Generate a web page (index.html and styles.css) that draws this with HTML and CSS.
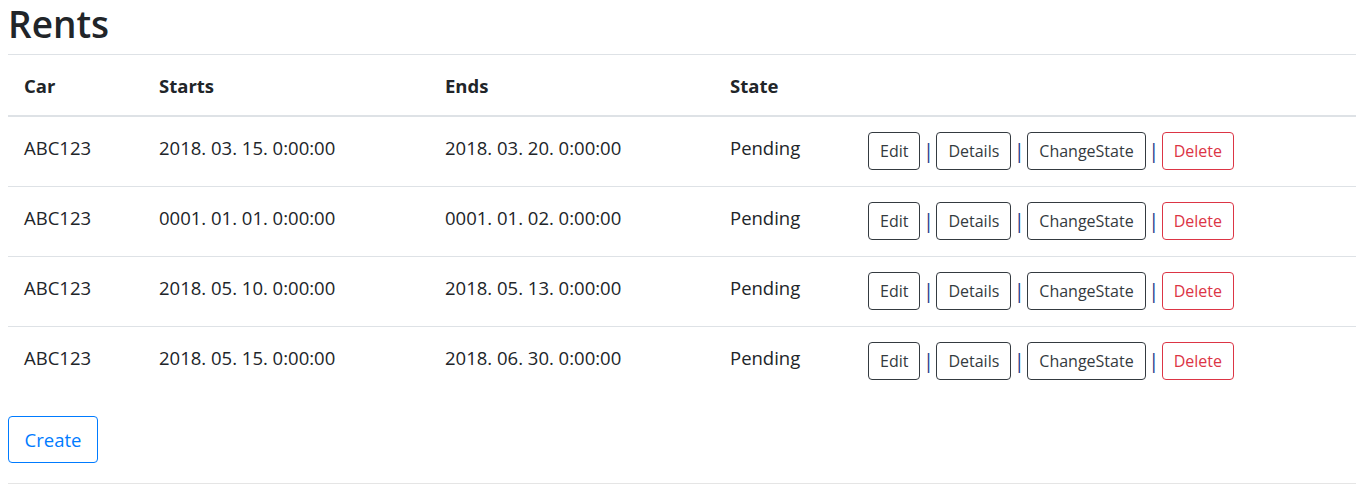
FILE: index.html
```html
<!DOCTYPE html>
<html lang="en">
<head>
<meta charset="utf-8">
<title>Rents</title>
<link rel="stylesheet" href="styles.css">
</head>
<body>
<h1 class="title">Rents</h1>
<table class="table">
  <colgroup>
    <col class="c-car">
    <col class="c-start">
    <col class="c-end">
    <col class="c-state">
    <col class="c-act">
  </colgroup>
  <thead>
    <tr>
      <th>Car</th>
      <th>Starts</th>
      <th>Ends</th>
      <th>State</th>
      <th></th>
    </tr>
  </thead>
  <tbody>
    <tr>
      <td>ABC123</td>
      <td>2018. 03. 15. 0:00:00</td>
      <td>2018. 03. 20. 0:00:00</td>
      <td>Pending</td>
      <td class="actions"><div class="btns"><a class="btn btn-dark">Edit</a><span class="sep">|</span><a class="btn btn-dark">Details</a><span class="sep">|</span><a class="btn btn-dark">ChangeState</a><span class="sep">|</span><a class="btn btn-danger">Delete</a></div></td>
    </tr>
    <tr>
      <td>ABC123</td>
      <td>0001. 01. 01. 0:00:00</td>
      <td>0001. 01. 02. 0:00:00</td>
      <td>Pending</td>
      <td class="actions"><div class="btns"><a class="btn btn-dark">Edit</a><span class="sep">|</span><a class="btn btn-dark">Details</a><span class="sep">|</span><a class="btn btn-dark">ChangeState</a><span class="sep">|</span><a class="btn btn-danger">Delete</a></div></td>
    </tr>
    <tr>
      <td>ABC123</td>
      <td>2018. 05. 10. 0:00:00</td>
      <td>2018. 05. 13. 0:00:00</td>
      <td>Pending</td>
      <td class="actions"><div class="btns"><a class="btn btn-dark">Edit</a><span class="sep">|</span><a class="btn btn-dark">Details</a><span class="sep">|</span><a class="btn btn-dark">ChangeState</a><span class="sep">|</span><a class="btn btn-danger">Delete</a></div></td>
    </tr>
    <tr>
      <td>ABC123</td>
      <td>2018. 05. 15. 0:00:00</td>
      <td>2018. 06. 30. 0:00:00</td>
      <td>Pending</td>
      <td class="actions"><div class="btns"><a class="btn btn-dark">Edit</a><span class="sep">|</span><a class="btn btn-dark">Details</a><span class="sep">|</span><a class="btn btn-dark">ChangeState</a><span class="sep">|</span><a class="btn btn-danger">Delete</a></div></td>
    </tr>
  </tbody>
</table>
<div class="create-row"><a class="btn-create">Create</a></div>
<hr class="rule">
</body>
</html>
```
FILE: styles.css
```css
html, body {
  background: #fff;
}
body {
  margin: 0 0 0 8px;
  font-family: "Open Sans", "Noto Sans", sans-serif;
  color: #212529;
  font-size: 18.5px;
  line-height: 27px;
}
.title {
  margin: 0;
  height: 54px;
  font-size: 37px;
  font-weight: 600;
  line-height: 47px;
  color: #212529;
}
.table {
  width: 100%;
  table-layout: fixed;
  border-collapse: collapse;
  border-top: 1px solid #dee2e6;
}
.c-car { width: 136px; }
.c-start { width: 286px; }
.c-end { width: 285px; }
.c-state { width: 138px; }
.table th, .table td {
  padding: 17px 15px 15px 15px;
  text-align: left;
  vertical-align: top;
  white-space: nowrap;
}
.table th:first-child, .table td:first-child {
  padding-left: 16px;
}
.table th {
  font-weight: 700;
  padding-top: 17px;
  padding-bottom: 16px;
  border-bottom: 2px solid #dee2e6;
}
.table tbody tr + tr td {
  border-top: 1px solid #dee2e6;
}
.table td.actions {
  padding: 15px 15px 16px 15px;
}
.btns {
  display: flex;
  align-items: center;
  gap: 6px;
}
.btn {
  display: inline-block;
  box-sizing: border-box;
  height: 38px;
  padding: 0 11px;
  font-size: 16px;
  line-height: 36px;
  border: 1px solid #343a40;
  border-radius: 4px;
  color: #343a40;
}
.btn-danger {
  border-color: #dc3545;
  color: #dc3545;
}
.sep {
  display: flex;
  justify-content: center;
  width: 4px;
  font-size: 20px;
  line-height: 24px;
  color: #1f3a8a;
}
.create-row {
  margin-top: 20px;
}
.btn-create {
  display: inline-block;
  box-sizing: border-box;
  width: 90px;
  height: 47px;
  line-height: 45px;
  text-align: center;
  font-size: 18.5px;
  border: 1px solid #007bff;
  border-radius: 4px;
  color: #007bff;
}
.rule {
  margin: 20px 0 0 0;
  border: 0;
  border-top: 1px solid #e5e5e5;
}
```
